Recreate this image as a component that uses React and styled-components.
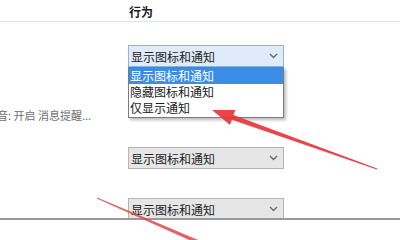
import React from "react";
import styled, { createGlobalStyle } from "styled-components";

const GlobalStyle = createGlobalStyle`
  html, body { margin: 0; padding: 0; background: #ffffff; }
  body { font-family: "Noto Sans CJK SC", "Noto Sans", sans-serif; color: #1a1a1a; }
`;

const Page = styled.div`
  position: relative;
  width: 400px;
  height: 240px;
  overflow: hidden;
  background: #ffffff;
`;

const Header = styled.div`
  display: grid;
  grid-template-columns: 128px 1fr;
  box-sizing: border-box;
  height: 22px;
  padding-top: 4px;
  border-bottom: 1px solid #e3e3e3;
`;

const HeaderCell = styled.div`
  font-size: 12px;
  line-height: 16px;
  font-weight: 700;
  color: #222;
  padding-left: 1px;
`;

const List = styled.div`
  box-sizing: border-box;
  height: 196px;
  padding-top: 23px;
  overflow: hidden;
`;

const Row = styled.div`
  display: grid;
  grid-template-columns: 128px 156px;
  align-items: start;
  height: 51px;
`;

const Label = styled.div`
  overflow: hidden;
  white-space: nowrap;
  font-size: 11px;
  line-height: 14px;
  padding-top: 12px;
  color: #707070;
`;

const LabelText = styled.span`
  display: inline-block;
  margin-left: -14px;
`;

const SelectWrap = styled.div`
  position: relative;
  z-index: ${(p) => (p.$open ? 2 : 1)};
  visibility: ${(p) => (p.$covered ? "hidden" : "visible")};
`;

const Select = styled.div`
  box-sizing: border-box;
  height: 22px;
  display: flex;
  align-items: center;
  justify-content: space-between;
  padding: 0 5px 0 2px;
  font-size: 12px;
  color: #222;
  background: ${(p) => (p.$open ? "#dfebf8" : "#e6e6e6")};
  border: 1px solid ${(p) => (p.$open ? "#8db5e2" : "#b4b4b4")};
`;

const Menu = styled.div`
  position: absolute;
  top: 22px;
  left: 0;
  width: 156px;
  box-sizing: border-box;
  border: 1px solid #7c7c7c;
  background: #ffffff;
  box-shadow: 2px 2px 3px rgba(0, 0, 0, 0.28);
  padding-bottom: 1px;
`;

const MenuItem = styled.div`
  height: 16px;
  line-height: 16px;
  font-size: 12px;
  padding-left: 1px;
  color: ${(p) => (p.$active ? "#ffffff" : "#1a1a1a")};
  background: ${(p) => (p.$active ? "#3a8ce4" : "transparent")};
`;

const Footer = styled.div`
  border-top: 2px solid #9a9a9a;
  height: 20px;
  background: #ffffff;
`;

const Overlay = styled.svg`
  position: absolute;
  left: 0;
  top: 0;
  width: 400px;
  height: 240px;
  pointer-events: none;
  z-index: 5;
`;

const Chevron = () => (
  <svg width="9" height="6" viewBox="0 0 9 6">
    <path d="M1 1 L4.5 4.5 L8 1" fill="none" stroke="#6a6a6a" strokeWidth="1.4" />
  </svg>
);

const OPTION = "显示图标和通知";

export default function App() {
  const rows = [
    { label: "", open: true },
    { label: "声音: 开启 消息提醒...", open: false, covered: true },
    { label: "", open: false },
    { label: "", open: false },
  ];
  return (
    <Page>
      <GlobalStyle />
      <Header>
        <div />
        <HeaderCell>行为</HeaderCell>
      </Header>
      <List>
        {rows.map((r, i) => (
          <Row key={i}>
            <Label>{r.label && <LabelText>{r.label}</LabelText>}</Label>
            <SelectWrap $open={r.open} $covered={r.covered}>
              <Select $open={r.open}>
                <span>{OPTION}</span>
                <Chevron />
              </Select>
              {r.open && (
                <Menu>
                  <MenuItem $active>显示图标和通知</MenuItem>
                  <MenuItem>隐藏图标和通知</MenuItem>
                  <MenuItem>仅显示通知</MenuItem>
                </Menu>
              )}
            </SelectWrap>
          </Row>
        ))}
      </List>
      <Footer />
      <Overlay viewBox="0 0 400 240">
        <polygon
          points="212,110 235.4,109.9 233.5,115 377.2,168.5 376.8,169.5 231.9,119.8 230,124.9"
          fill="#e8353a"
          opacity="0.92"
        />
        <polygon
          points="97.2,197.5 205.8,243.2 204.2,246.8 96.8,198.5"
          fill="#e0454a"
          opacity="0.85"
        />
      </Overlay>
    </Page>
  );
}
